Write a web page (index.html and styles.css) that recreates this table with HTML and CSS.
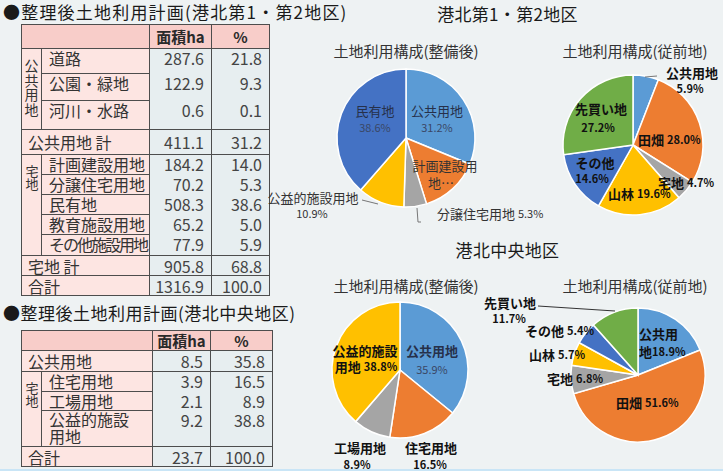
FILE: index.html
```html
<!DOCTYPE html>
<html lang="ja">
<head>
<meta charset="utf-8">
<link rel="stylesheet" href="styles.css">
</head>
<body>
<div class="page">
  <div class="left">
    <h2 class="ttl ttl-1">●整理後土地利用計画(港北第1・第2地区)</h2>
    <table class="t t1">
      <colgroup><col class="c-sub"><col class="c-lab"><col class="c-area"><col class="c-pct"></colgroup>
      <tr class="r24"><th colspan="2"></th><th>面積ha</th><th>%</th></tr>
      <tr class="r25"><td rowspan="3" class="vert v-pub"><span class="vt">公共用地</span></td><td class="lab">道路</td><td class="num open">287.6</td><td class="num open">21.8</td></tr>
      <tr class="r27"><td class="lab">公園・緑地</td><td class="num open">122.9</td><td class="num open">9.3</td></tr>
      <tr class="r29"><td class="lab">河川・水路</td><td class="num">0.6</td><td class="num">0.1</td></tr>
      <tr class="r25 mid"><td colspan="2" class="sum">公共用地 計</td><td class="num">411.1</td><td class="num">31.2</td></tr>
      <tr class="r20"><td rowspan="5" class="vert v-res"><span class="vt">宅地</span></td><td class="lab">計画建設用地</td><td class="num open">184.2</td><td class="num open">14.0</td></tr>
      <tr class="r20"><td class="lab">分譲住宅用地</td><td class="num open">70.2</td><td class="num open">5.3</td></tr>
      <tr class="r20"><td class="lab">民有地</td><td class="num open">508.3</td><td class="num open">38.6</td></tr>
      <tr class="r20"><td class="lab">教育施設用地</td><td class="num open">65.2</td><td class="num open">5.0</td></tr>
      <tr class="r21"><td class="lab tight">その他施設用地</td><td class="num">77.9</td><td class="num">5.9</td></tr>
      <tr class="r20 mid"><td colspan="2" class="sum">宅地 計</td><td class="num">905.8</td><td class="num">68.8</td></tr>
      <tr class="r20 mid"><td colspan="2" class="sum">合計</td><td class="num">1316.9</td><td class="num">100.0</td></tr>
    </table>
    <h2 class="ttl ttl-2">●整理後土地利用計画(港北中央地区)</h2>
    <table class="t t2">
      <colgroup><col class="c-sub"><col class="c-lab2"><col class="c-area2"><col class="c-pct2"></colgroup>
      <tr class="r20"><th colspan="2"></th><th>面積ha</th><th>%</th></tr>
      <tr class="r21 mid"><td colspan="2" class="sum">公共用地</td><td class="num">8.5</td><td class="num">35.8</td></tr>
      <tr class="r20"><td rowspan="3" class="vert v-res"><span class="vt">宅地</span></td><td class="lab">住宅用地</td><td class="num open">3.9</td><td class="num open">16.5</td></tr>
      <tr class="r19"><td class="lab">工場用地</td><td class="num open">2.1</td><td class="num open">8.9</td></tr>
      <tr class="r36"><td class="lab two">公益的施設<br>用地</td><td class="num">9.2</td><td class="num">38.8</td></tr>
      <tr class="r20 mid"><td colspan="2" class="sum">合計</td><td class="num">23.7</td><td class="num">100.0</td></tr>
    </table>
  </div>
  <div class="right">
    <section class="district d1">
      <h3 class="dist dist-1">港北第1・第2地区</h3>
      <div class="charts">
        <svg class="chart" width="220" height="207" viewBox="0 0 220 207">
          <text class="ct" x="106" y="22">土地利用構成(整備後)</text>
          <g class="slices">
            <path fill="#5b9bd5" d="M106 110 L106 41 A69 69 0 0 1 169.83 136.21Z"/>
            <path fill="#ed7d31" d="M106 110 L169.83 136.21 A69 69 0 0 1 126.5 175.89Z"/>
            <path fill="#a5a5a5" d="M106 110 L126.5 175.89 A69 69 0 0 1 103.83 178.97Z"/>
            <path fill="#ffc000" d="M106 110 L103.83 178.97 A69 69 0 0 1 60.69 162.04Z"/>
            <path fill="#4472c4" d="M106 110 L60.69 162.04 A69 69 0 0 1 106 41Z"/>
          </g>
          <path class="lead" d="M62 172 L78 176"/>
          <path class="lead" d="M117 180 L118 194 L121 194"/>
          <text class="lb navy" x="137" y="82">公共用地</text>
          <text class="pc navy" x="137" y="99">31.2%</text>
          <text class="lb navy" x="75" y="82">民有地</text>
          <text class="pc navy" x="75" y="99">38.6%</text>
          <text class="lb" x="145" y="137">計画建設用</text>
          <text class="lb" x="141" y="154">地…</text>
          <text class="lb" x="13" y="169">公益的施設用地</text>
          <text class="pc" x="12" y="185">10.9%</text>
          <text class="lb st" x="137" y="185">分譲住宅用地 <tspan class="pcs">5.3%</tspan></text>
        </svg>
        <svg class="chart" width="203" height="207" viewBox="0 0 203 207">
          <text class="ct" x="115" y="22">土地利用構成(従前地)</text>
          <g class="slices">
            <path fill="#5b9bd5" d="M113 117 L113 47 A70 70 0 0 1 138.35 51.75Z"/>
            <path fill="#ed7d31" d="M113 117 L138.35 51.75 A70 70 0 0 1 172.34 154.14Z"/>
            <path fill="#a5a5a5" d="M113 117 L172.34 154.14 A70 70 0 0 1 158.96 169.79Z"/>
            <path fill="#ffc000" d="M113 117 L158.96 169.79 A70 70 0 0 1 78.51 177.91Z"/>
            <path fill="#4472c4" d="M113 117 L78.51 177.91 A70 70 0 0 1 43.67 126.65Z"/>
            <path fill="#70ad47" d="M113 117 L43.67 126.65 A70 70 0 0 1 113 47Z"/>
          </g>
          <path class="lead" d="M125 49 L137 48"/>
          <text class="lb bd" x="172" y="44">公共用地</text>
          <text class="pc bd" x="170" y="60">5.9%</text>
          <text class="lb bd" x="81" y="80">先買い地</text>
          <text class="pc bd" x="78" y="99">27.2%</text>
          <text class="lb bd st" x="118" y="111">田畑 <tspan class="pcs">28.0%</tspan></text>
          <text class="lb bd" x="75" y="134">その他</text>
          <text class="pc bd" x="72" y="150">14.6%</text>
          <text class="lb bd st" x="138" y="154">宅地 <tspan class="pcs">4.7%</tspan></text>
          <text class="lb bd st" x="88" y="165">山林 <tspan class="pcs">19.6%</tspan></text>
        </svg>
      </div>
    </section>
    <section class="district d2">
      <h3 class="dist dist-2">港北中央地区</h3>
      <div class="charts">
        <svg class="chart" width="200" height="206" viewBox="0 0 200 206">
          <text class="ct" x="106" y="20">土地利用構成(整備後)</text>
          <g class="slices">
            <path fill="#5b9bd5" d="M100 105 L100 37 A68 68 0 0 1 152.67 148.01Z"/>
            <path fill="#ed7d31" d="M100 105 L152.67 148.01 A68 68 0 0 1 89.79 172.23Z"/>
            <path fill="#a5a5a5" d="M100 105 L89.79 172.23 A68 68 0 0 1 55.68 156.57Z"/>
            <path fill="#ffc000" d="M100 105 L55.68 156.57 A68 68 0 0 1 100 37Z"/>
          </g>
          <text class="lb bd" x="65" y="85">公益的施設</text>
          <text class="lb bd" x="66" y="101">用地 <tspan class="pcs">38.8%</tspan></text>
          <text class="lb bd navy" x="132" y="85">公共用地</text>
          <text class="pc navy" x="132" y="104">35.9%</text>
          <text class="lb bd" x="60" y="182">工場用地</text>
          <text class="pc bd" x="57" y="199">8.9%</text>
          <text class="lb bd" x="131" y="182">住宅用地</text>
          <text class="pc bd" x="130" y="199">16.5%</text>
        </svg>
        <svg class="chart" width="223" height="206" viewBox="0 0 223 206">
          <text class="ct" x="135" y="20">土地利用構成(従前地)</text>
          <g class="slices">
            <path fill="#5b9bd5" d="M138 110 L138 43 A67 67 0 0 1 200.14 84.95Z"/>
            <path fill="#ed7d31" d="M138 110 L200.14 84.95 A67 67 0 1 1 73.66 128.69Z"/>
            <path fill="#a5a5a5" d="M138 110 L73.66 128.69 A67 67 0 0 1 71.7 100.35Z"/>
            <path fill="#ffc000" d="M138 110 L71.7 100.35 A67 67 0 0 1 79.29 77.72Z"/>
            <path fill="#4472c4" d="M138 110 L79.29 77.72 A67 67 0 0 1 93.38 60.01Z"/>
            <path fill="#70ad47" d="M138 110 L93.38 60.01 A67 67 0 0 1 138 43Z"/>
          </g>
          <path class="lead dark" d="M38 41 L115 46"/>
          <text class="lb bd" x="10" y="37">先買い地</text>
          <text class="pc bd" x="9" y="53">11.7%</text>
          <text class="lb bd st" x="25" y="65">その他 <tspan class="pcs">5.4%</tspan></text>
          <text class="lb bd st" x="29" y="89">山林 <tspan class="pcs">5.7%</tspan></text>
          <text class="lb bd st" x="47" y="113">宅地 <tspan class="pcs">6.8%</tspan></text>
          <text class="lb bd st" x="139" y="68">公共用</text>
          <text class="lb bd st" x="139" y="86">地<tspan class="pcs">18.9%</tspan></text>
          <text class="lb bd st" x="116" y="137">田畑 <tspan class="pcs">51.6%</tspan></text>
        </svg>
      </div>
    </section>
  </div>
</div>
</body>
</html>
```

FILE: styles.css
```css
* { box-sizing: border-box; }
body {
  margin: 0;
  background: #eef2f3;
  font-family: "Noto Sans CJK JP", "Noto Sans", sans-serif;
  color: #333;
}
.page {
  display: flex;
  width: 723px;
  height: 471px;
  border-bottom: 2px solid #c9e5f6;
  overflow: hidden;
}
.left { width: 300px; flex: none; }
.right { flex: 1; display: flex; flex-direction: column; }

.ttl {
  margin: 0;
  padding-left: 3px;
  font-size: 17px;
  font-weight: normal;
  color: #1a1a1a;
  white-space: nowrap;
}
.ttl-1 { height: 24px; line-height: 24px; letter-spacing: 1.2px; }
.ttl-2 { height: 34px; line-height: 34px; letter-spacing: 0.5px; }

.t {
  border-collapse: separate;
  border-spacing: 0;
  margin-left: 21px;
  border-top: 1px solid #4d4d4d;
  border-left: 1px solid #4d4d4d;
  table-layout: fixed;
  font-size: 16px;
}
.t1 { width: 249px; }
.t2 { width: 252px; }
.c-sub { width: 20px; }
.c-lab { width: 108px; }
.c-area { width: 62px; }
.c-pct { width: 58px; }
.c-lab2 { width: 111px; }
.c-area2 { width: 58px; }
.c-pct2 { width: 62px; }

.t td, .t th {
  border-right: 1px solid #4d4d4d;
  border-bottom: 1px solid #4d4d4d;
  padding: 0;
  line-height: 18px;
  vertical-align: top;
  background: #fde5e2;
  color: #333;
  white-space: nowrap;
}
.t th {
  background: #f8cdc9;
  font-size: 15px;
  font-weight: bold;
  vertical-align: middle;
  color: #2a2a2a;
}
.t .mid td { vertical-align: middle; }
.t .num {
  background: #e7eef0;
  text-align: right;
  padding-right: 7px;
  color: #444;
}
.t .open { border-bottom: none; }
.t .lab { padding-left: 7px; }
.t .sum { padding-left: 6px; }
.t .tight { letter-spacing: -2px; }
.t .two { line-height: 17px; }
.t .vert { text-align: center; padding-top: 10px; }
.vt {
  display: inline-block;
  writing-mode: vertical-rl;
  line-height: 18px;
}
.v-pub .vt { font-size: 14px; letter-spacing: 0.5px; }
.v-res .vt { font-size: 13px; letter-spacing: -0.5px; }

.r19 { height: 19px; }
.r20 { height: 20px; }
.r21 { height: 21px; }
.r24 { height: 24px; }
.r25 { height: 25px; }
.r27 { height: 27px; }
.r29 { height: 29px; }
.r36 { height: 36px; }

.district { display: flex; flex-direction: column; }
.dist {
  margin: 0;
  font-size: 17px;
  font-weight: normal;
  text-align: center;
  padding-right: 8px;
  color: #1a1a1a;
  letter-spacing: 0.3px;
}
.dist-1 { height: 28px; line-height: 28px; }
.dist-2 { height: 30px; line-height: 30px; }
.charts { display: flex; }
.chart { display: block; overflow: visible; }

.ct {
  font-size: 15px;
  fill: #333;
  text-anchor: middle;
  dominant-baseline: central;
}
.slices path { stroke: #fff; stroke-width: 1.5; }
.lead { fill: none; stroke: #777; stroke-width: 1; }
.lead.dark { stroke: #333; }
.lb {
  font-size: 13px;
  fill: #333;
  text-anchor: middle;
  dominant-baseline: central;
}
.pc {
  font-size: 11px;
  fill: #333;
  text-anchor: middle;
  dominant-baseline: central;
}
.pcs { font-size: 11px; }
.st { text-anchor: start; }
.bd { font-weight: bold; fill: #111; }
.navy { fill: #26304a; }
.pc.navy { fill: #3a4766; }
```
